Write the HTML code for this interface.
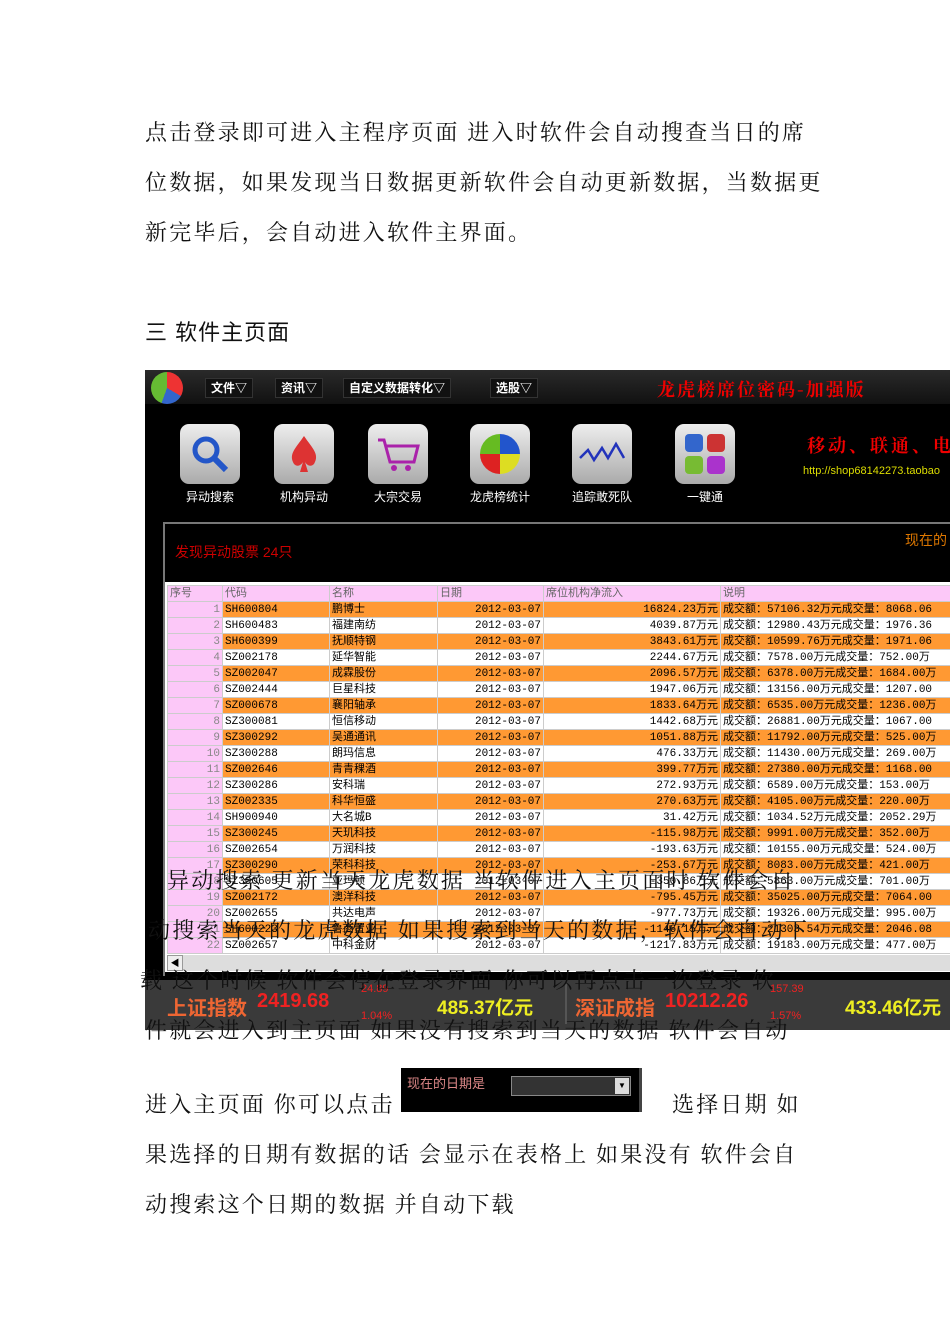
<!DOCTYPE html>
<html><head><meta charset="utf-8"><style>
body{margin:0;background:#fff;width:950px;height:1344px;position:relative;overflow:hidden;font-family:"Liberation Serif","Noto Serif CJK SC",serif}
.t{position:absolute;left:145px;font-size:22px;letter-spacing:2.2px;color:#111;white-space:nowrap;line-height:30px}
#app{position:absolute;left:145px;top:370px;width:805px;height:660px;background:#000;overflow:hidden;font-family:"Liberation Sans","Noto Sans CJK SC",sans-serif}
.menu{position:absolute;top:0;left:0;right:0;height:34px;background:linear-gradient(#2a2a2a,#111)}
.mi{position:absolute;top:8px;height:18px;border:1px solid #333;background:#111;color:#fff;font-size:12px;font-weight:bold;line-height:18px;padding:0 5px}
.ic{position:absolute;top:54px;width:60px;height:60px;border-radius:9px;background:linear-gradient(#eee,#aaa)}
.lb{position:absolute;top:118px;color:#fff;font-size:12px;width:90px;text-align:center}
table{position:absolute;left:22px;top:215px;border-collapse:collapse;font-size:11px;font-family:"Liberation Mono","Noto Sans CJK SC",monospace;table-layout:fixed}
td{height:15px;padding:0 2px;border:1px solid #ccc;white-space:nowrap;line-height:14px;overflow:hidden}
tr.o td{background:#ff9933}
tr td:first-child{background:#fcc8f8!important;text-align:right;color:#888}
tr.h td{background:#fcc8f8;color:#666}
.r{text-align:right}
</style></head><body>
<div class="t" style="top:118px">点击登录即可进入主程序页面 进入时软件会自动搜查当日的席</div>
<div class="t" style="top:168px">位数据，如果发现当日数据更新软件会自动更新数据，当数据更</div>
<div class="t" style="top:218px">新完毕后，会自动进入软件主界面。</div>
<div class="t" style="top:318px;font-family:'Liberation Sans','Noto Sans CJK SC',sans-serif;letter-spacing:1px">三  软件主页面</div>
<div id="app">
<div class="menu">
<div style="position:absolute;left:6px;top:2px;width:32px;height:32px;border-radius:50%;background:conic-gradient(#e33 0 120deg,#36c 120deg 200deg,#6b3 200deg 360deg)"></div>
<div class="mi" style="left:60px">文件▽</div><div class="mi" style="left:130px">资讯▽</div>
<div class="mi" style="left:198px">自定义数据转化▽</div><div class="mi" style="left:345px">选股▽</div>
<div style="position:absolute;left:512px;top:6px;color:#e00;font-size:18px;font-weight:bold;letter-spacing:2px;font-family:'Noto Serif CJK SC',serif">龙虎榜席位密码-加强版</div>
</div>
<div class="ic" style="left:35px"><svg width="60" height="60"><circle cx="26" cy="26" r="11" fill="none" stroke="#2356c8" stroke-width="5"/><line x1="34" y1="34" x2="46" y2="46" stroke="#2356c8" stroke-width="6"/></svg></div>
<div class="ic" style="left:129px"><svg width="60" height="60"><path d="M30 12C38 24 46 30 40 40C36 44 32 40 31 38L34 48H26L29 38C28 40 24 44 20 40C14 30 22 24 30 12Z" fill="#d33"/></svg></div>
<div class="ic" style="left:223px"><svg width="60" height="60"><path d="M10 16H16L22 38H46L50 22H18" fill="none" stroke="#a2a" stroke-width="3"/><circle cx="26" cy="44" r="3" fill="#a2a"/><circle cx="40" cy="44" r="3" fill="#a2a"/></svg></div>
<div class="ic" style="left:325px"><svg width="60" height="60"><path d="M30 30V10A20 20 0 0 0 10 30Z" fill="#6b2"/><path d="M30 30V10A20 20 0 0 1 50 30Z" fill="#25c"/><path d="M30 30H10A20 20 0 0 0 30 50Z" fill="#d22"/><path d="M30 30H50A20 20 0 0 1 30 50Z" fill="#dd2"/></svg></div>
<div class="ic" style="left:427px"><svg width="60" height="60"><path d="M8 34L16 26L22 36L30 24L36 34L44 20L52 34" fill="none" stroke="#23b" stroke-width="2.5"/></svg></div>
<div class="ic" style="left:530px"><svg width="60" height="60"><rect x="10" y="10" width="18" height="18" rx="4" fill="#36c"/><rect x="32" y="10" width="18" height="18" rx="4" fill="#c33"/><rect x="10" y="32" width="18" height="18" rx="4" fill="#7b3"/><rect x="32" y="32" width="18" height="18" rx="4" fill="#a3c"/></svg></div>
<div class="lb" style="left:20px">异动搜索</div><div class="lb" style="left:114px">机构异动</div><div class="lb" style="left:208px">大宗交易</div><div class="lb" style="left:310px">龙虎榜统计</div><div class="lb" style="left:412px">追踪敢死队</div><div class="lb" style="left:515px">一键通</div>
<div style="position:absolute;left:662px;top:62px;color:#e00;font-size:18px;font-weight:bold;font-family:'Noto Serif CJK SC',serif;letter-spacing:3px;white-space:nowrap">移动、联通、电</div>
<div style="position:absolute;left:658px;top:95px;color:#dd0;font-size:11px;white-space:nowrap">http://shop68142273.taobao</div>
<div style="position:absolute;left:18px;top:152px;width:800px;height:460px;border:2px solid #777;border-right:none"></div>
<div style="position:absolute;left:30px;top:172px;color:#c00;font-size:14px">发现异动股票 24只</div>
<div style="position:absolute;left:760px;top:160px;color:#d70;font-size:14px;white-space:nowrap">现在的</div>
<div style="position:absolute;left:20px;top:212px;width:790px;height:390px;background:#fff"></div>
<table style="width:850px">
<colgroup><col style="width:55px"><col style="width:107px"><col style="width:108px"><col style="width:106px"><col style="width:177px"><col style="width:297px"></colgroup>
<tr class="h"><td style="text-align:left">序号</td><td>代码</td><td>名称</td><td>日期</td><td>席位机构净流入</td><td>说明</td></tr>
<tr class="o"><td>1</td><td>SH600804</td><td>鹏博士</td><td class="r">2012-03-07</td><td class="r">16824.23万元</td><td>成交额：57106.32万元成交量：8068.06</td></tr>
<tr><td>2</td><td>SH600483</td><td>福建南纺</td><td class="r">2012-03-07</td><td class="r">4039.87万元</td><td>成交额：12980.43万元成交量：1976.36</td></tr>
<tr class="o"><td>3</td><td>SH600399</td><td>抚顺特钢</td><td class="r">2012-03-07</td><td class="r">3843.61万元</td><td>成交额：10599.76万元成交量：1971.06</td></tr>
<tr><td>4</td><td>SZ002178</td><td>延华智能</td><td class="r">2012-03-07</td><td class="r">2244.67万元</td><td>成交额：7578.00万元成交量：752.00万</td></tr>
<tr class="o"><td>5</td><td>SZ002047</td><td>成霖股份</td><td class="r">2012-03-07</td><td class="r">2096.57万元</td><td>成交额：6378.00万元成交量：1684.00万</td></tr>
<tr><td>6</td><td>SZ002444</td><td>巨星科技</td><td class="r">2012-03-07</td><td class="r">1947.06万元</td><td>成交额：13156.00万元成交量：1207.00</td></tr>
<tr class="o"><td>7</td><td>SZ000678</td><td>襄阳轴承</td><td class="r">2012-03-07</td><td class="r">1833.64万元</td><td>成交额：6535.00万元成交量：1236.00万</td></tr>
<tr><td>8</td><td>SZ300081</td><td>恒信移动</td><td class="r">2012-03-07</td><td class="r">1442.68万元</td><td>成交额：26881.00万元成交量：1067.00</td></tr>
<tr class="o"><td>9</td><td>SZ300292</td><td>吴通通讯</td><td class="r">2012-03-07</td><td class="r">1051.88万元</td><td>成交额：11792.00万元成交量：525.00万</td></tr>
<tr><td>10</td><td>SZ300288</td><td>朗玛信息</td><td class="r">2012-03-07</td><td class="r">476.33万元</td><td>成交额：11430.00万元成交量：269.00万</td></tr>
<tr class="o"><td>11</td><td>SZ002646</td><td>青青稞酒</td><td class="r">2012-03-07</td><td class="r">399.77万元</td><td>成交额：27380.00万元成交量：1168.00</td></tr>
<tr><td>12</td><td>SZ300286</td><td>安科瑞</td><td class="r">2012-03-07</td><td class="r">272.93万元</td><td>成交额：6589.00万元成交量：153.00万</td></tr>
<tr class="o"><td>13</td><td>SZ002335</td><td>科华恒盛</td><td class="r">2012-03-07</td><td class="r">270.63万元</td><td>成交额：4105.00万元成交量：220.00万</td></tr>
<tr><td>14</td><td>SH900940</td><td>大名城B</td><td class="r">2012-03-07</td><td class="r">31.42万元</td><td>成交额：1034.52万元成交量：2052.29万</td></tr>
<tr class="o"><td>15</td><td>SZ300245</td><td>天玑科技</td><td class="r">2012-03-07</td><td class="r">-115.98万元</td><td>成交额：9991.00万元成交量：352.00万</td></tr>
<tr><td>16</td><td>SZ002654</td><td>万润科技</td><td class="r">2012-03-07</td><td class="r">-193.63万元</td><td>成交额：10155.00万元成交量：524.00万</td></tr>
<tr class="o"><td>17</td><td>SZ300290</td><td>荣科科技</td><td class="r">2012-03-07</td><td class="r">-253.67万元</td><td>成交额：8083.00万元成交量：421.00万</td></tr>
<tr><td>18</td><td>SZ300605</td><td>亚玛顿</td><td class="r">2012-03-07</td><td class="r">-350.86万元</td><td>成交额：5863.00万元成交量：701.00万</td></tr>
<tr class="o"><td>19</td><td>SZ002172</td><td>澳洋科技</td><td class="r">2012-03-07</td><td class="r">-795.45万元</td><td>成交额：35025.00万元成交量：7064.00</td></tr>
<tr><td>20</td><td>SZ002655</td><td>共达电声</td><td class="r">2012-03-07</td><td class="r">-977.73万元</td><td>成交额：19326.00万元成交量：995.00万</td></tr>
<tr class="o"><td>21</td><td>SH600223</td><td>鲁商置业</td><td class="r">2012-03-07</td><td class="r">-1146.15万元</td><td>成交额：21303.54万元成交量：2046.08</td></tr>
<tr><td>22</td><td>SZ002657</td><td>中科金财</td><td class="r">2012-03-07</td><td class="r">-1217.83万元</td><td>成交额：19183.00万元成交量：477.00万</td></tr>
</table>
<div style="position:absolute;left:22px;top:585px;width:790px;height:16px;background:#ddd"><div style="width:14px;height:14px;border:1px solid #999;background:#eee;font-size:9px;text-align:center">◀</div></div>
<div style="position:absolute;left:0;top:606px;width:805px;height:54px;background:#3a3a3a;border-top:4px solid #000"></div>
<div style="position:absolute;left:22px;top:622px;color:#e63;font-size:20px;font-weight:bold">上证指数</div>
<div style="position:absolute;left:112px;top:620px;color:#e22;font-size:20px;font-weight:bold">2419.68</div>
<div style="position:absolute;left:216px;top:613px;color:#e22;font-size:11px">24.89</div>
<div style="position:absolute;left:216px;top:640px;color:#e22;font-size:11px">1.04%</div>
<div style="position:absolute;left:292px;top:623px;color:#ee2;font-size:19px;font-weight:bold">485.37亿元</div>
<div style="position:absolute;left:420px;top:614px;width:2px;height:40px;background:#555"></div>
<div style="position:absolute;left:430px;top:622px;color:#e63;font-size:20px;font-weight:bold">深证成指</div>
<div style="position:absolute;left:520px;top:620px;color:#e22;font-size:20px;font-weight:bold">10212.26</div>
<div style="position:absolute;left:625px;top:613px;color:#e22;font-size:11px">157.39</div>
<div style="position:absolute;left:625px;top:640px;color:#e22;font-size:11px">1.57%</div>
<div style="position:absolute;left:700px;top:623px;color:#ee2;font-size:19px;font-weight:bold">433.46亿元</div>
</div>
<div class="t" style="top:866px;left:167px">异动搜索 更新当天龙虎数据 当软件进入主页面时 软件会自</div>
<div class="t" style="top:916px;left:148px">动搜索当天的龙虎数据 如果搜索到当天的数据，软件会自动下</div>
<div class="t" style="top:966px;left:140px">载 这个时候 软件会停在登录界面 你可以再点击一次登录 软</div>
<div class="t" style="top:1016px">件就会进入到主页面 如果没有搜索到当天的数据 软件会自动</div>
<div class="t" style="top:1090px">进入主页面 你可以点击</div>
<div style="position:absolute;left:401px;top:1068px;width:238px;height:44px;background:#000;border-right:3px solid #444">
<div style="position:absolute;left:6px;top:5px;color:#d88;font-size:13px;font-family:'Liberation Sans','Noto Sans CJK SC',sans-serif">现在的日期是</div>
<div style="position:absolute;left:110px;top:8px;width:118px;height:18px;background:#333;border:1px solid #888"><div style="position:absolute;right:1px;top:1px;width:14px;height:16px;background:#ddd;font-size:8px;text-align:center;line-height:16px">▼</div></div></div>
<div class="t" style="top:1090px;left:672px">选择日期 如</div>
<div class="t" style="top:1140px">果选择的日期有数据的话 会显示在表格上 如果没有 软件会自</div>
<div class="t" style="top:1190px">动搜索这个日期的数据 并自动下载</div>
</body></html>
